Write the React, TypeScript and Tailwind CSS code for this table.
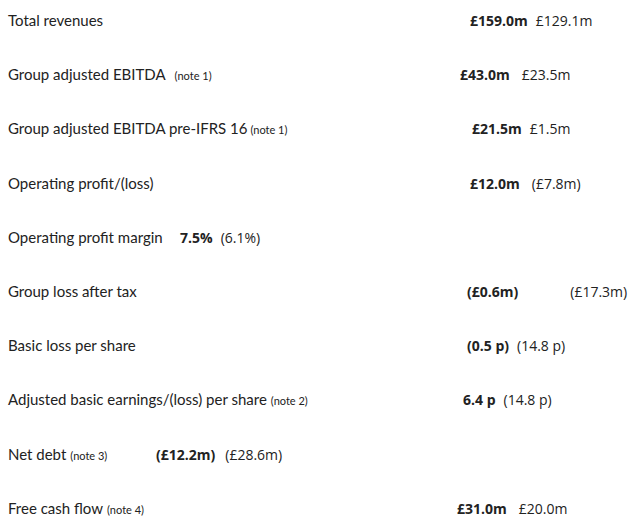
const label = "font-['Lato','Liberation_Sans',sans-serif] text-[15px] text-[#222]";
const note = "font-['Lato','Liberation_Sans',sans-serif] text-[11px] text-[#222]";
const val = "font-['Open_Sans','Liberation_Sans',sans-serif] text-[14px] text-[#222]";

type Row = {
  text: string;
  note?: string;
  noteClass?: string;
  labelWidth: string;
  bold: string;
  prior: string;
  gap: string;
};

const rows: Row[] = [
  { text: 'Total revenues', labelWidth: 'w-[462px]', bold: '£159.0m', prior: '£129.1m', gap: 'ml-[8px]' },
  { text: 'Group adjusted EBITDA', note: '(note 1)', noteClass: 'ml-[9px]', labelWidth: 'w-[452px]', bold: '£43.0m', prior: '£23.5m', gap: 'ml-[12px]' },
  { text: 'Group adjusted EBITDA pre-IFRS 16', note: '(note 1)', noteClass: 'ml-[3px]', labelWidth: 'w-[464px]', bold: '£21.5m', prior: '£1.5m', gap: 'ml-[8px]' },
  { text: 'Operating profit/(loss)', labelWidth: 'w-[462px]', bold: '£12.0m', prior: '(£7.8m)', gap: 'ml-[12px]' },
  { text: 'Operating profit margin', labelWidth: 'w-[172px]', bold: '7.5%', prior: '(6.1%)', gap: 'ml-[8px]' },
  { text: 'Group loss after tax', labelWidth: 'w-[459px]', bold: '(£0.6m)', prior: '(£17.3m)', gap: 'ml-[52px]' },
  { text: 'Basic loss per share', labelWidth: 'w-[459px]', bold: '(0.5 p)', prior: '(14.8 p)', gap: 'ml-[8px]' },
  { text: 'Adjusted basic earnings/(loss) per share', note: '(note 2)', noteClass: 'ml-[4px]', labelWidth: 'w-[455px]', bold: '6.4 p', prior: '(14.8 p)', gap: 'ml-[8px]' },
  { text: 'Net debt', note: '(note 3)', noteClass: 'ml-[4px]', labelWidth: 'w-[148px]', bold: '(£12.2m)', prior: '(£28.6m)', gap: 'ml-[10px]' },
  { text: 'Free cash flow', note: '(note 4)', noteClass: 'ml-[4px]', labelWidth: 'w-[449px]', bold: '£31.0m', prior: '£20.0m', gap: 'ml-[12px]' },
];

export default function App() {
  return (
    <div className="min-h-[526px] w-[638px] bg-white pl-[8px] pt-[9px]">
      <div className="flex flex-col gap-[34.2px]">
        {rows.map((r) => (
          <div key={r.text} className="flex h-[20px] items-baseline whitespace-nowrap">
            <div className={`flex shrink-0 items-baseline ${r.labelWidth}`}>
              <span className={label}>{r.text}</span>
              {r.note && <span className={`${note} ${r.noteClass}`}>{r.note}</span>}
            </div>
            <span className={`${val} font-bold`}>{r.bold}</span>
            <span className={`${val} ${r.gap}`}>{r.prior}</span>
          </div>
        ))}
      </div>
    </div>
  );
}
